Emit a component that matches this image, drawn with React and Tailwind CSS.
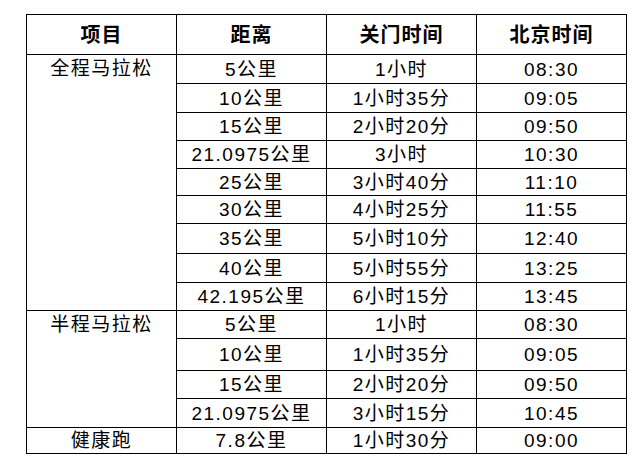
import React from 'react';

const rows = [
  { group: '全程马拉松', span: 9, dist: '5公里', close: '1小时', time: '08:30', h: 29 },
  { dist: '10公里', close: '1小时35分', time: '09:05', h: 29 },
  { dist: '15公里', close: '2小时20分', time: '09:50', h: 28 },
  { dist: '21.0975公里', close: '3小时', time: '10:30', h: 28 },
  { dist: '25公里', close: '3小时40分', time: '11:10', h: 27 },
  { dist: '30公里', close: '4小时25分', time: '11:55', h: 28 },
  { dist: '35公里', close: '5小时10分', time: '12:40', h: 30 },
  { dist: '40公里', close: '5小时55分', time: '13:25', h: 29 },
  { dist: '42.195公里', close: '6小时15分', time: '13:45', h: 28 },
  { group: '半程马拉松', span: 4, dist: '5公里', close: '1小时', time: '08:30', h: 28 },
  { dist: '10公里', close: '1小时35分', time: '09:05', h: 32 },
  { dist: '15公里', close: '2小时20分', time: '09:50', h: 28 },
  { dist: '21.0975公里', close: '3小时15分', time: '10:45', h: 29 },
  { group: '健康跑', span: 1, dist: '7.8公里', close: '1小时30分', time: '09:00', h: 26, middle: true },
];

const cell = 'border border-black text-center p-0 leading-none';

export default function App() {
  return (
    <div className="min-h-screen bg-white pt-[14px] pl-[26px] text-black font-['Liberation_Sans','Noto_Sans_CJK_SC',sans-serif] text-[19px] tracking-[1.5px]">
      <table className="border-collapse w-[601px] table-fixed">
        <thead>
          <tr className="h-[40px]">
            {['项目', '距离', '关门时间', '北京时间'].map((t) => (
              <th key={t} className={`${cell} font-bold text-[20px] tracking-[1px] w-[150px]`}>{t}</th>
            ))}
          </tr>
        </thead>
        <tbody>
          {rows.map((r, i) => (
            <tr key={i} style={{ height: r.h }}>
              {r.group && (
                <td
                  rowSpan={r.span}
                  className={`${cell} ${r.middle ? 'align-middle' : 'align-top pt-[4px]'}`}
                >
                  {r.group}
                </td>
              )}
              <td className={cell}>{r.dist}</td>
              <td className={cell}>{r.close}</td>
              <td className={cell}>{r.time}</td>
            </tr>
          ))}
        </tbody>
      </table>
    </div>
  );
}
